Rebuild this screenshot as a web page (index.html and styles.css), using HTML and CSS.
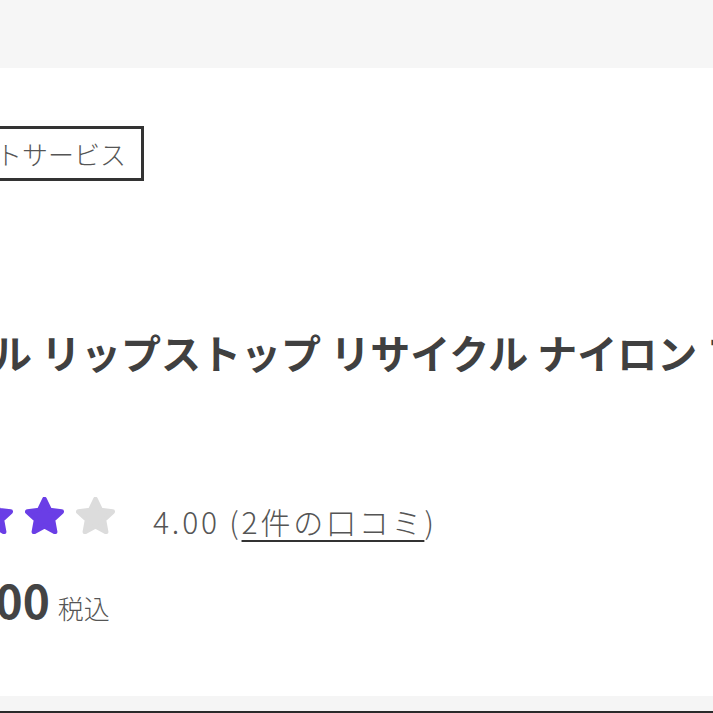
FILE: index.html
```html
<!DOCTYPE html>
<html lang="ja">
<head>
<meta charset="utf-8">
<link rel="stylesheet" href="styles.css">
</head>
<body>
<div class="page">
  <div class="topband"></div>
  <main class="main">
    <div class="tag-row"><span class="tag">ポイントサービス</span></div>
    <h1 class="title">トラベル リップストップ リサイクル ナイロン フーディ</h1>
    <div class="rating">
      <div class="stars">
        <svg class="star on" viewBox="2.3 2.1 19.4 18.6"><path d="M12 3.2l2.6 5.5 6 .8-4.4 4.1 1.1 6L12 16.7l-5.3 2.9 1.1-6-4.4-4.1 6-.8z"/></svg>
        <svg class="star on" viewBox="2.3 2.1 19.4 18.6"><path d="M12 3.2l2.6 5.5 6 .8-4.4 4.1 1.1 6L12 16.7l-5.3 2.9 1.1-6-4.4-4.1 6-.8z"/></svg>
        <svg class="star on" viewBox="2.3 2.1 19.4 18.6"><path d="M12 3.2l2.6 5.5 6 .8-4.4 4.1 1.1 6L12 16.7l-5.3 2.9 1.1-6-4.4-4.1 6-.8z"/></svg>
        <svg class="star on" viewBox="2.3 2.1 19.4 18.6"><path d="M12 3.2l2.6 5.5 6 .8-4.4 4.1 1.1 6L12 16.7l-5.3 2.9 1.1-6-4.4-4.1 6-.8z"/></svg>
        <svg class="star off" viewBox="2.3 2.1 19.4 18.6"><path d="M12 3.2l2.6 5.5 6 .8-4.4 4.1 1.1 6L12 16.7l-5.3 2.9 1.1-6-4.4-4.1 6-.8z"/></svg>
      </div>
      <span class="score">4.00 (<a class="reviews" href="#">2件の口コミ</a>)</span>
    </div>
    <div class="price"><span class="amount">¥35,200</span><span class="tax">税込</span></div>
  </main>
  <div class="bottomband"></div>
</div>
</body>
</html>
```
FILE: styles.css
```css
html, body {
  margin: 0;
  padding: 0;
  background: #ffffff;
  overflow: hidden;
}
.page {
  width: 713px;
  height: 713px;
  display: flex;
  flex-direction: column;
  overflow: hidden;
  font-family: "Noto Sans CJK JP", "Noto Sans", sans-serif;
  color: #444;
}
.topband {
  height: 68px;
  flex: none;
  background: #f6f6f6;
}
.main {
  flex: 1;
  margin-left: -128px;
  display: flex;
  flex-direction: column;
}
.tag-row {
  margin-top: 58px;
  display: flex;
}
.tag {
  display: inline-block;
  border: 3px solid #333;
  padding: 0 15px 0 43px;
  height: 49px;
  line-height: 49px;
  font-size: 26px;
  font-weight: 300;
  color: #555;
  white-space: nowrap;
}
.title {
  margin: 146px 0 0 0;
  font-size: 40px;
  font-weight: 700;
  line-height: 50px;
  color: #404040;
  white-space: nowrap;
}
.rating {
  margin-top: 118px;
  display: flex;
  align-items: center;
  height: 40px;
}
.stars {
  display: flex;
  gap: 12px;
}
.star {
  width: 39px;
  height: 37px;
}
.star path {
  stroke-width: 2.4;
  stroke-linejoin: round;
}
.star.on path { fill: #6a3ee6; stroke: #6a3ee6; }
.star.off path { fill: #dcdcdc; stroke: #dcdcdc; }
.score {
  margin-left: 38px;
  margin-top: 12px;
  font-size: 30px;
  font-weight: 300;
  color: #555;
  letter-spacing: 2.8px;
}
.reviews {
  color: #555;
  text-decoration: underline;
  text-decoration-color: #333;
  text-decoration-thickness: 2px;
  text-underline-offset: 6px;
}
.price {
  margin-top: 31px;
  display: flex;
  align-items: baseline;
}
.amount {
  font-size: 46px;
  font-weight: 700;
  color: #444;
}
.tax {
  margin-left: 8px;
  font-size: 26px;
  font-weight: 300;
  color: #555;
}
.bottomband {
  height: 15px;
  flex: none;
  background: #f5f5f5;
  border-bottom: 2px solid #2a2a2a;
}
```
